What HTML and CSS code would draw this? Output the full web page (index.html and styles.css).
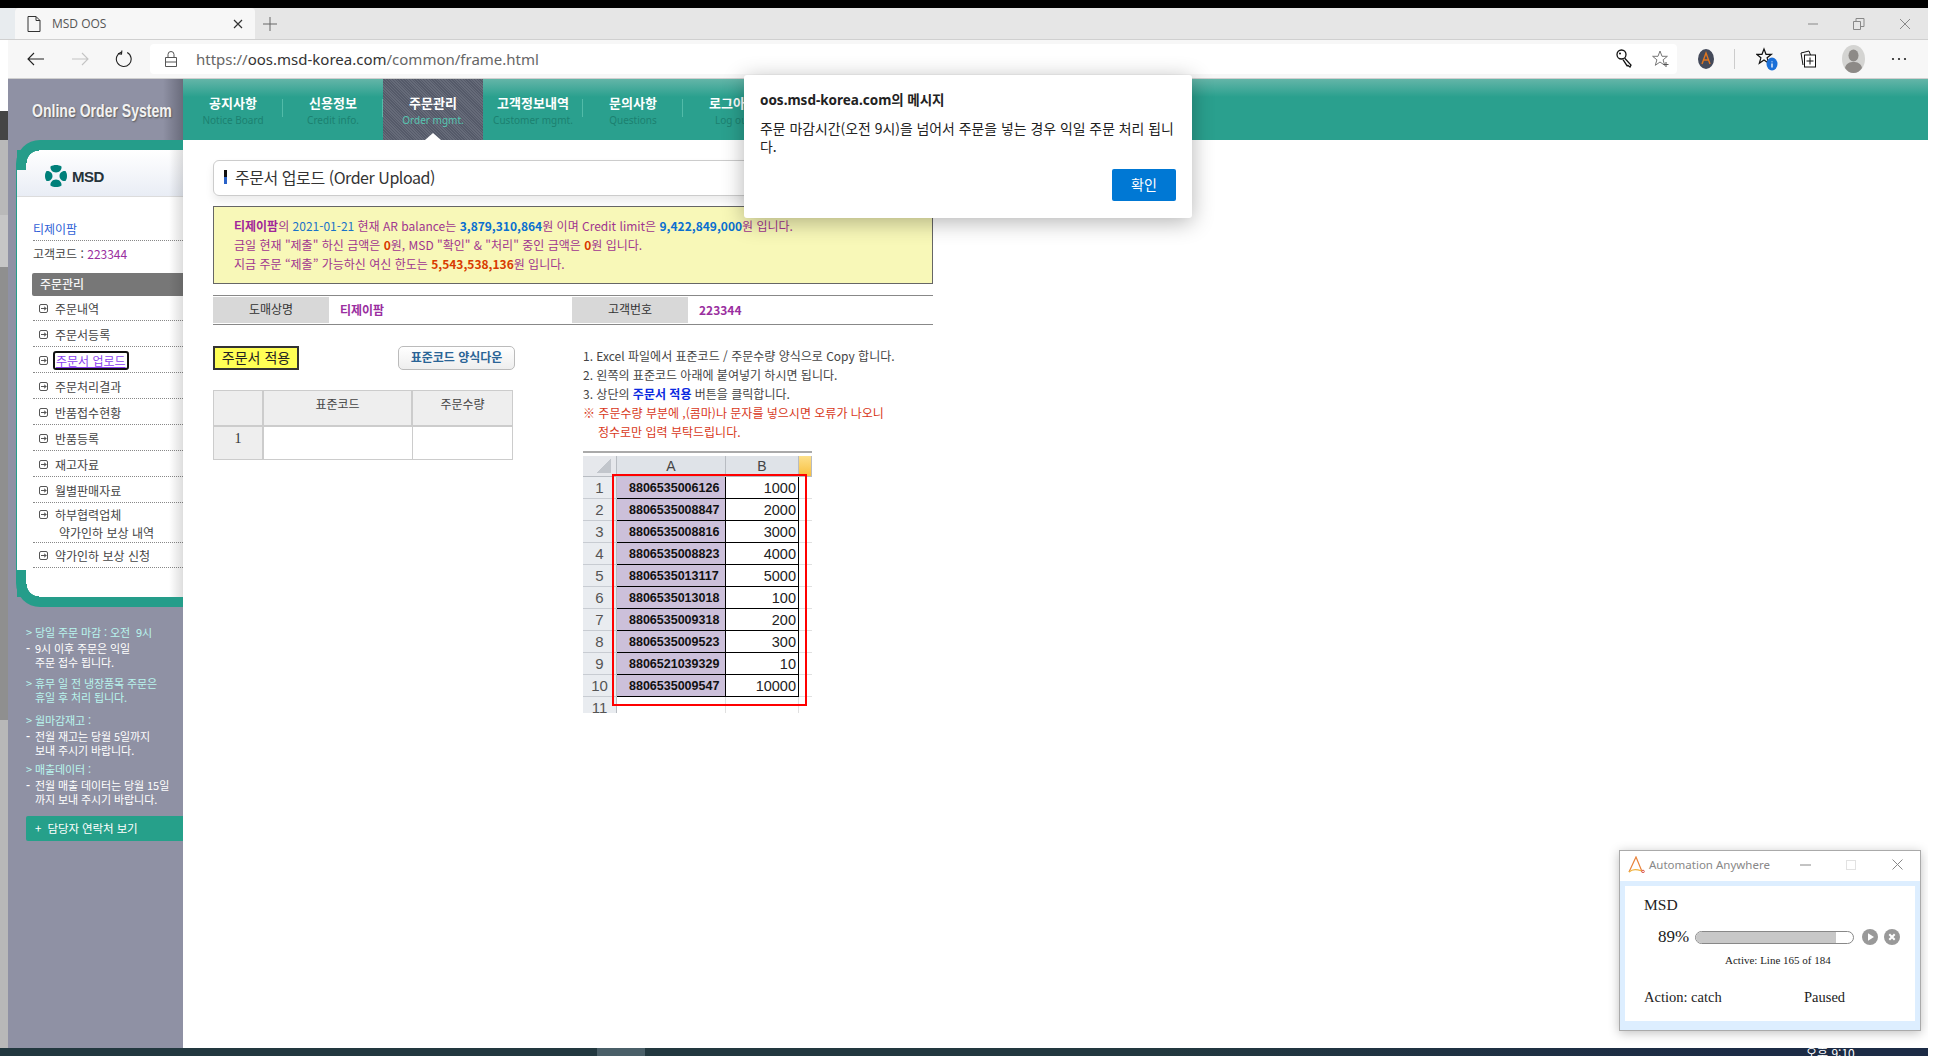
FILE: index.html
```html
<!DOCTYPE html>
<html lang="ko">
<head>
<meta charset="utf-8">
<title>MSD OOS</title>
<link rel="stylesheet" href="styles.css">
</head>
<body>
<div class="screen">
  <div class="topblack"></div>
  <div class="desk">
    <div class="behind">
      <div class="b1"></div><div class="b2"></div><div class="b3"></div><div class="b4"></div><div class="b5"></div><div class="b6"></div><div class="b7"></div>
    </div>
    <div class="browser">
      <div class="tabstrip">
        <div class="tab">
          <svg class="ic-doc" width="14" height="16" viewBox="0 0 14 16"><path d="M1 .5h8l4 4v11H1z M9 .5v4h4" fill="none" stroke="#333"/></svg>
          <span class="tab-title">MSD OOS</span>
          <svg class="ic-x" width="10" height="10" viewBox="0 0 10 10"><path d="M1 1l8 8M9 1l-8 8" stroke="#333" stroke-width="1.2"/></svg>
        </div>
        <svg class="ic-plus" width="16" height="16" viewBox="0 0 16 16"><path d="M8 1v14M1 8h14" stroke="#666"/></svg>
        <div class="winctl">
          <svg width="12" height="12" viewBox="0 0 12 12"><path d="M1 6h10" stroke="#888"/></svg>
          <svg width="12" height="12" viewBox="0 0 12 12"><path d="M.5 3.5h7v8h-7z M3 3.5V.5h8v8H7.5" fill="none" stroke="#888"/></svg>
          <svg width="12" height="12" viewBox="0 0 12 12"><path d="M1 1l10 10M11 1L1 11" stroke="#888"/></svg>
        </div>
      </div>
      <div class="toolbar">
        <svg class="tb-back" width="18" height="14" viewBox="0 0 18 14"><path d="M17 7H1M7 1L1 7l6 6" fill="none" stroke="#222" stroke-width="1.1"/></svg>
        <svg class="tb-fwd" width="18" height="14" viewBox="0 0 18 14"><path d="M1 7h16M11 1l6 6-6 6" fill="none" stroke="#c4c4c4" stroke-width="1.1"/></svg>
        <svg class="tb-ref" width="18" height="18" viewBox="0 0 18 18"><path d="M11.5 2.2A7.4 7.4 0 1 1 5.8 2.3M6 .8v3.6H2.4" fill="none" stroke="#222" stroke-width="1.1" transform="rotate(6 9 9)"/></svg>
        <div class="addr">
          <svg class="ic-lock" width="12" height="16" viewBox="0 0 12 16"><path d="M.5 6.5h11v9H.5zM3 6.5V3.5a3 3 0 0 1 6 0v3M.5 11h11" fill="none" stroke="#555"/></svg>
          <span class="url"><span class="u-dim">https://</span>oos.msd-korea.com<span class="u-dim">/common/frame.html</span></span>
          <svg class="ic-key" width="18" height="20" viewBox="0 0 18 20"><circle cx="5.5" cy="5.5" r="4.5" fill="#fff" stroke="#111" stroke-width="1.3"/><path d="M8.5 9l6.5 7-1 2-2-1.5-1 .2-4-6" fill="#fff" stroke="#111" stroke-width="1.3"/><circle cx="4" cy="4.5" r="1" fill="#111"/></svg>
          <svg class="ic-star" width="18" height="18" viewBox="0 0 18 18"><path d="M8 1l2 5.3h5.4l-4.3 3.5 1.6 5.5L8 12l-4.7 3.3 1.6-5.5L.6 6.300H6z" fill="none" stroke="#777"/><path d="M14 12v5M11.500 14.500h5" stroke="#555"/></svg>
        </div>
        <div class="tb-right">
          <svg class="ic-ext" width="16" height="20" viewBox="0 0 16 20"><ellipse cx="8" cy="10" rx="8" ry="10" fill="#444a5a"/><path d="M4 15L8 4l4 11M5.500 11h5" fill="none" stroke="#e0761e" stroke-width="1.4"/></svg>
          <span class="tb-sep"></span>
          <svg class="ic-fav" width="22" height="24" viewBox="0 0 22 24"><path d="M8 2l2 5.300h5.400l-4.300 3.500 1.600 5.500L8 13l-4.700 3.300 1.600-5.500L.6 7.300H6z" fill="none" stroke="#111" stroke-width="1.200"/><ellipse cx="16" cy="17" rx="5.500" ry="6.500" fill="#1a6fd8"/><path d="M16 14.500v.8M16 16.500v4" stroke="#fff" stroke-width="1.300"/></svg>
          <svg class="ic-coll" width="16" height="18" viewBox="0 0 16 18"><path d="M1 3l8-2 1.500 4M1 3l2 12" fill="none" stroke="#111"/><rect x="4.500" y="5" width="11" height="12" fill="#fff" stroke="#111"/><path d="M10 7.500v7M6.500 11h7" stroke="#111"/></svg>
          <svg class="ic-user" width="23" height="28" viewBox="0 0 23 28"><ellipse cx="11.500" cy="14" rx="11.500" ry="14" fill="#d4d4d2"/><ellipse cx="11.500" cy="10.500" rx="5" ry="6" fill="#8d8a87"/><path d="M3 23c1-5 5-6 8.500-6s7.500 1 8.500 6c-2 3-5 5-8.500 5S5 26 3 23z" fill="#8d8a87"/></svg>
          <svg class="ic-dots" width="16" height="4" viewBox="0 0 16 4"><circle cx="2" cy="2" r="1.100" fill="#222"/><circle cx="8" cy="2" r="1.100" fill="#222"/><circle cx="14" cy="2" r="1.100" fill="#222"/></svg>
        </div>
      </div>
      <div class="page">
        <aside class="side">
          <div class="side-title"><span>Online Order System</span></div>
          <div class="panel">
            <div class="panel-in">
              <div class="msd">
                <svg width="22" height="22" viewBox="0 0 22 22"><path d="M5.500 1.500C7 .5 9 0 11 0s4 .5 5.500 1.500C17 4.500 14.500 7.500 11 7.500S5 4.500 5.500 1.500zM5.500 20.500C7 21.500 9 22 11 22s4-.5 5.500-1.500C17 17.500 14.500 14.500 11 14.500S5 17.500 5.500 20.500zM0 11c0-2 .5-3.500 1.500-5C5 5.500 7.500 8 7.500 11S5 16.500 1.500 16C.5 14.500 0 13 0 11zM22 11c0-2-.5-3.500-1.500-5C17 5.500 14.500 8 14.500 11s2.500 5.500 6 5c1-1.500 1.500-3 1.500-5z" fill="#00807a"/></svg>
                <span class="msd-t">MSD</span>
              </div>
              <div class="cust">
                <a class="cust-name">티제이팜</a>
                <div class="cust-code">고객코드 : <span class="pur">223344</span></div>
              </div>
              <div class="menu-h">주문관리</div>
              <ul class="menu">
                <li><span class="mi"><i></i></span><span>주문내역</span></li>
                <li><span class="mi"><i></i></span><span>주문서등록</span></li>
                <li><span class="mi"><i></i></span><span class="focus">주문서 업로드</span></li>
                <li><span class="mi"><i></i></span><span>주문처리결과</span></li>
                <li><span class="mi"><i></i></span><span>반품접수현황</span></li>
                <li><span class="mi"><i></i></span><span>반품등록</span></li>
                <li><span class="mi"><i></i></span><span>재고자료</span></li>
                <li><span class="mi"><i></i></span><span>월별판매자료</span></li>
                <li class="two"><div class="li-top"><span class="mi"><i></i></span><span>하부협력업체</span></div><div class="sub">약가인하 보상 내역</div></li>
                <li class="last"><span class="mi"><i></i></span><span>약가인하 보상 신청</span></li>
              </ul>
            </div>
          </div>
          <div class="notes">
            <div class="note n1"><div class="nh"><b>&gt;</b>당일 주문 마감 : 오전 &nbsp;9시</div><div class="nb"><b>-</b>9시 이후 주문은 익일<br>주문 접수 됩니다.</div></div>
            <div class="note n2"><div class="nh two-l"><b>&gt;</b>휴무 일 전 냉장품목 주문은<br>휴일 후 처리 됩니다.</div></div>
            <div class="note n3"><div class="nh"><b>&gt;</b>월마감재고 :</div><div class="nb"><b>-</b>전월 재고는 당월 5일까지<br>보내 주시기 바랍니다.</div></div>
            <div class="note n4"><div class="nh"><b>&gt;</b>매출데이터 :</div><div class="nb"><b>-</b>전월 매출 데이터는 당월 15일<br>까지 보내 주시기 바랍니다.</div></div>
            <div class="contact">+ &nbsp;담당자 연락처 보기</div>
          </div>
        </aside>
        <main class="main">
          <nav class="nav">
            <div class="ni"><b>공지사항</b><small>Notice Board</small></div>
            <div class="ni"><b>신용정보</b><small>Credit info.</small></div>
            <div class="ni on"><b>주문관리</b><small>Order mgmt.</small></div>
            <div class="ni"><b>고객정보내역</b><small>Customer mgmt.</small></div>
            <div class="ni"><b>문의사항</b><small>Questions</small></div>
            <div class="ni"><b>로그아웃</b><small>Log out</small></div>
          </nav>
          <div class="body">
            <div class="title"><span class="mark"></span>주문서 업로드 (Order Upload)</div>
            <div class="notice">
              <div><b class="pur2">티제이팜</b>의 <span class="dt">2021-01-21</span> 현재 AR balance는 <b class="amt">3,879,310,864</b>원 이며 Credit limit은 <b class="amt">9,422,849,000</b>원 입니다.</div>
              <div>금일 현재 "제출" 하신 금액은 <b class="red">0</b>원, MSD "확인" &amp; "처리" 중인 금액은 <b class="red">0</b>원 입니다.</div>
              <div>지금 주문 “제출” 가능하신 여신 한도는 <b class="red">5,543,538,136</b>원 입니다.</div>
            </div>
            <div class="info">
              <div class="il">도매상명</div><div class="iv iv1">티제이팜</div>
              <div class="il">고객번호</div><div class="iv">223344</div>
            </div>
            <div class="cols">
              <div class="colL">
                <div class="btns">
                  <div class="apply">주문서 적용</div>
                  <div class="dl">표준코드 양식다운</div>
                </div>
                <div class="sheet">
                  <div class="sh c0"></div><div class="sh c1">표준코드</div><div class="sh c2">주문수량</div>
                  <div class="sn">1</div><div class="sc"></div><div class="sc"></div>
                </div>
              </div>
              <div class="colR">
                <div class="ins">
                  <div>1. Excel 파일에서 표준코드 / 주문수량 양식으로 Copy 합니다.</div>
                  <div>2. 왼쪽의 표준코드 아래에 붙여넣기 하시면 됩니다.</div>
                  <div>3. 상단의 <b class="blue">주문서 적용</b> 버튼을 클릭합니다.</div>
                  <div class="warn">※ 주문수량 부분에 ,(콤마)나 문자를 넣으시면 오류가 나오니</div>
                  <div class="warn ind">정수로만 입력 부탁드립니다.</div>
                </div>
                <div class="xl">
                  <div class="xtop"></div>
                  <div class="xgrid">
                    <div class="xh xc"></div><div class="xh">A</div><div class="xh">B</div><div class="xh xo"></div>
                    <div class="rh">1</div><div class="a">8806535006126</div><div class="v">1000</div><div class="e"></div>
                    <div class="rh">2</div><div class="a">8806535008847</div><div class="v">2000</div><div class="e"></div>
                    <div class="rh">3</div><div class="a">8806535008816</div><div class="v">3000</div><div class="e"></div>
                    <div class="rh">4</div><div class="a">8806535008823</div><div class="v">4000</div><div class="e"></div>
                    <div class="rh">5</div><div class="a">8806535013117</div><div class="v">5000</div><div class="e"></div>
                    <div class="rh">6</div><div class="a">8806535013018</div><div class="v">100</div><div class="e"></div>
                    <div class="rh">7</div><div class="a">8806535009318</div><div class="v">200</div><div class="e"></div>
                    <div class="rh">8</div><div class="a">8806535009523</div><div class="v">300</div><div class="e"></div>
                    <div class="rh">9</div><div class="a">8806521039329</div><div class="v">10</div><div class="e"></div>
                    <div class="rh">10</div><div class="a">8806535009547</div><div class="v">10000</div><div class="e"></div>
                    <div class="rh">11</div><div class="blank"></div><div class="blank"></div><div class="e"></div>
                  </div>
                  <div class="redbox"></div>
                </div>
              </div>
            </div>
          </div>
        </main>
      </div>
    </div>
  </div>
  <div class="taskbar">
    <span class="task-on"></span>
    <span class="clock">오후 9:10</span>
  </div>

  <div class="dialog">
    <div class="d-title">oos.msd-korea.com의 메시지</div>
    <div class="d-text">주문 마감시간(오전 9시)을 넘어서 주문을 넣는 경우 익일 주문 처리 됩니다.</div>
    <div class="d-foot"><span class="d-btn">확인</span></div>
  </div>

  <div class="aa">
    <div class="aa-bar">
      <svg class="aa-logo" width="17" height="17" viewBox="0 0 17 17"><path d="M1 16L8 1l6 14.500" fill="none" stroke="#e8833a" stroke-width="1.200"/><path d="M1 16c4-3.500 8-2.500 13-1" fill="none" stroke="#f0b23c" stroke-width="1.200"/><circle cx="15" cy="15.500" r="1.300" fill="none" stroke="#d9534f"/></svg>
      <span class="aa-name">Automation Anywhere</span>
      <svg class="aa-min" width="11" height="2" viewBox="0 0 11 2"><path d="M0 1h11" stroke="#888"/></svg>
      <svg class="aa-max" width="10" height="10" viewBox="0 0 10 10"><rect x=".5" y=".5" width="9" height="9" fill="none" stroke="#e2e2e2"/></svg>
      <svg class="aa-x" width="11" height="11" viewBox="0 0 11 11"><path d="M.5.5l10 10M10.500.5l-10 10" stroke="#888"/></svg>
    </div>
    <div class="aa-body">
      <div class="aa-msd">MSD</div>
      <div class="aa-prog">
        <span class="aa-pct">89%</span>
        <span class="aa-track"><span class="aa-fill" style="width:89%"></span></span>
        <svg class="aa-b" width="16" height="16" viewBox="0 0 16 16"><circle cx="8" cy="8" r="8" fill="#999"/><path d="M6 4.300v7.400L12 8z" fill="#fff"/></svg>
        <svg class="aa-b2" width="16" height="16" viewBox="0 0 16 16"><circle cx="8" cy="8" r="8" fill="#999"/><path d="M5.300 5.300l5.400 5.400M10.700 5.300l-5.400 5.400" stroke="#fff" stroke-width="2"/></svg>
      </div>
      <div class="aa-line">Active: Line 165 of 184</div>
      <div class="aa-foot"><span class="aa-act">Action: catch</span><span>Paused</span></div>
    </div>
  </div>
</div>
</body>
</html>
```
FILE: styles.css
```css
* { box-sizing: border-box; }
html, body { margin: 0; padding: 0; background: #fff; }
body { width: 1936px; height: 1056px; overflow: hidden; font-family: "Noto Sans CJK KR", "Noto Sans", sans-serif; font-size: 12px; color: #333; }
ul { list-style: none; margin: 0; padding: 0; }
svg { display: block; flex: none; }

.screen { position: relative; width: 1928px; height: 1056px; display: flex; flex-direction: column; overflow: hidden; }
.topblack { height: 8px; background: #000; flex: none; }
.desk { flex: 1; display: flex; min-height: 0; }
.taskbar { height: 8px; flex: none; display: flex; align-items: flex-start; background: linear-gradient(90deg, #22383f 0, #22383f 60%, #1c2b45 90%); overflow: hidden; padding-left: 597px; }
.task-on { width: 48px; height: 8px; background: #4a5f68; flex: none; }
.clock { margin-left: 1161px; color: #fff; font-size: 12px; line-height: 12px; margin-top: -1px; white-space: nowrap; }

.behind { width: 8px; flex: none; display: flex; flex-direction: column; }
.b1 { height: 32px; background: #e8ecef; }
.b2 { height: 71px; background: #fff; }
.b3 { height: 29px; background: #454545; }
.b4 { height: 75px; background: #b9b9b9; }
.b5 { height: 52px; background: #c6c6c6; }
.b6 { height: 453px; background: #8f8f8f; }
.b7 { flex: 1; background: #b8b8b8; }

.browser { flex: 1; min-width: 0; display: flex; flex-direction: column; }
.tabstrip { height: 32px; flex: none; border-bottom: 1px solid #d0d0d0; display: flex; align-items: flex-end; margin-left: -8px; padding-left: 15px; background: linear-gradient(90deg, #e8ecef 0, #e8ecef 15px, #e6e6e6 15px); }
.tab { width: 240px; height: 31px; background: #f7f7f7; border-radius: 4px 4px 0 0; display: flex; align-items: center; padding-left: 12px; color: #555; }
.tab-title { margin-left: 11px; font-family: "Open Sans", sans-serif; font-size: 12px; width: 181px; }
.ic-x { margin-left: 0; }
.ic-plus { margin: 0 0 7px 7px; }
.winctl { margin-left: auto; display: flex; gap: 34px; align-self: center; padding-right: 17px; }

.toolbar { height: 39px; flex: none; background: #f7f7f7; border-bottom: 1px solid #cfcfcf; display: flex; align-items: center; }
.tb-back { margin-left: 19px; }
.tb-fwd { margin-left: 26px; }
.tb-ref { margin-left: 26px; }
.addr { margin-left: 17px; width: 1527px; height: 30px; background: #fff; border-radius: 4px; display: flex; align-items: center; padding-left: 15px; }
.url { margin-left: 19px; font-family: "Noto Sans", sans-serif; font-size: 15px; color: #333; white-space: nowrap; }
.u-dim { color: #666; }
.ic-key { margin-left: auto; }
.ic-star { margin: 0 7px 0 18px; }
.tb-right { flex: 1; display: flex; align-items: center; padding-left: 21px; }
.tb-sep { width: 1px; height: 20px; background: #ccc; margin-left: 20px; }
.ic-fav { margin-left: 21px; }
.ic-coll { margin-left: 22px; }
.ic-user { margin-left: 26px; }
.ic-dots { margin-left: 26px; }

.page { flex: 1; min-height: 0; display: flex; }
.side { width: 175px; flex: none; background: #8f91a4; overflow: hidden; }
.side-title { height: 61px; padding: 0 0 0 24px; line-height: 64px; font-family: "Liberation Sans", sans-serif; font-weight: 700; font-size: 19px; color: #f2f2f2; white-space: nowrap; text-shadow: 1px 1px 2px #555; background: linear-gradient(90deg, transparent 155px, #6a6c7c 175px); overflow: hidden; }
.side-title span { display: inline-block; transform: scaleX(.74); transform-origin: 0 50%; }

.panel { margin-left: 8px; height: 467px; background: #259d8a; border-radius: 24px 0 0 24px; padding: 10px 0 10px 1px; }
.panel-in { position: relative; height: 447px; background: #fff; overflow: hidden; }
.panel-in::before { content: ""; position: absolute; left: 0; top: 0; width: 22px; height: 20px; background: radial-gradient(circle at 100% 100%, transparent 0, transparent 12px, #259d8a 12.5px) 9px 0 / 13px 13px no-repeat, linear-gradient(#259d8a, #259d8a) 0 0 / 9px 20px no-repeat; }
.panel-in::after { content: ""; position: absolute; inset: 0; background: radial-gradient(circle at 100% 0, transparent 0, transparent 12px, #259d8a 12.5px) 9px 100% / 13px 13px no-repeat, linear-gradient(#259d8a, #259d8a) 0 100% / 9px 27px no-repeat, linear-gradient(90deg, transparent 152px, rgba(0,0,0,.13) 166px); pointer-events: none; }
.msd { height: 47px; display: flex; align-items: center; padding: 6px 0 0 28px; background: linear-gradient(#fff, #e9edf5); border-bottom: 1px solid #dcdcdc; }
.msd-t { margin-left: 5px; font-family: "Liberation Sans", sans-serif; font-weight: 700; font-size: 15px; letter-spacing: -.5px; color: #26333a; }
.cust { padding: 21px 0 0 16px; }
.cust-name { display: block; height: 23px; line-height: 22px; color: #2f5fd6; border-bottom: 1px dotted #888; }
.cust-code { height: 32px; line-height: 26px; color: #444; }
.pur { color: #9a2ea0; }
.menu-h { margin-left: 15px; height: 23px; line-height: 22px; padding-left: 8px; background: #777; color: #f4f4f4; border-radius: 2px 0 0 2px; font-weight: 500; }
.menu { margin-left: 16px; }
.menu li { height: 26px; display: flex; align-items: center; border-bottom: 1px dotted #888; padding: 2px 0 0 6px; color: #444; }
.menu li:first-child { height: 25px; padding-top: 1px; }
.menu li.two { display: block; height: 40px; padding-top: 0; }
.li-top { display: flex; align-items: center; height: 22px; }
.sub { padding-left: 20px; line-height: 15px; }
.menu li.last { height: 25px; padding-top: 0; }
.mi { width: 9px; height: 9px; border: 1px solid #555; border-radius: 2px; margin-right: 7px; flex: none; display: block; background: linear-gradient(#555, #555) 1px 3px / 5px 1px no-repeat; }
.mi i { display: block; width: 3px; height: 3px; margin: 2px 0 0 3px; border-top: 1px solid #555; border-right: 1px solid #555; transform: rotate(45deg); }
.focus { border: 2px solid #111; border-radius: 3px; color: #8a3ff0; text-decoration: underline; padding: 0 1px; line-height: 15px; margin-left: -2px; }

.notes { padding-left: 18px; color: #fff; font-size: 11px; line-height: 14px; letter-spacing: -.1px; }
.note b { font-weight: 400; display: inline-block; width: 9px; text-indent: 0; }
.nb b { font-weight: 700; }
.nh { color: #b9f5ee; white-space: nowrap; }
.nb { padding-left: 9px; text-indent: -9px; margin-top: 2px; white-space: nowrap; }
.two-l { padding-left: 9px; text-indent: -9px; }
.n1 { margin-top: 18px; }
.n2 { margin-top: 7px; }
.n3 { margin-top: 9px; }
.n4 { margin-top: 5px; }
.contact { margin: 10px 0 0 0; height: 25px; line-height: 24px; padding-left: 9px; background: #26a08a; color: #fff; border-radius: 2px 0 0 2px; font-size: 11.5px; }

.main { flex: 1; min-width: 0; background: #fff; }
.nav { height: 61px; display: flex; background: linear-gradient(#64b5a8, #2aa08e 18px); }
.ni { position: relative; width: 100px; padding-top: 15px; display: flex; flex-direction: column; align-items: center; background: linear-gradient(#52bba8, #52bba8) 100% 20px / 1px 18px no-repeat; white-space: nowrap; }
.ni b { font-size: 13px; line-height: 18px; color: #fff; font-weight: 700; }
.ni small { font-family: "Noto Sans", sans-serif; font-size: 10px; line-height: 14px; margin-top: 1px; color: #1c8070; }
.ni.on { background: repeating-linear-gradient(45deg, #666b79 0 1px, #555a69 1px 2px); }
.ni.on small { color: #58c6b2; }
.ni.on::after { content: ""; position: absolute; left: 42px; bottom: 0; border: 8px solid transparent; border-top: 0; border-bottom: 7px solid #fff; }

.body { padding: 20px 0 0 30px; width: 750px; }
.title { height: 36px; width: 720px; border: 1px solid #ccc; border-radius: 6px; box-shadow: 0 5px 8px rgba(0,0,0,.08); display: flex; align-items: center; padding: 0 0 2px 10px; font-size: 16px; letter-spacing: -.45px; color: #333; }
.mark { width: 3px; height: 14px; margin-right: 8px; background: linear-gradient(#111 50%, #2a62c8 50%); }
.notice { margin-top: 10px; width: 720px; height: 78px; background: #f8f8b8; border: 1px solid #666; padding: 10px 0 0 20px; color: #a0358f; line-height: 18.75px; font-size: 12px; white-space: nowrap; }
.pur2 { color: #a0259a; }
.dt { color: #1a73c8; }
.amt { color: #0a6fd0; }
.red { color: #d83a00; }

.info { margin-top: 11px; width: 720px; height: 30px; border-top: 1px solid #888; border-bottom: 1px solid #888; padding: 1px 0; display: flex; }
.il { width: 116px; background: #d8d8d8; text-align: center; line-height: 24px; color: #333; }
.iv { padding-left: 11px; line-height: 26px; color: #9a2ea0; font-weight: 700; }
.iv1 { width: 243px; }

.cols { display: flex; margin-top: 21px; }
.colL { width: 370px; flex: none; }
.btns { width: 302px; display: flex; justify-content: space-between; }
.apply { width: 86px; height: 24px; background: #ffff55; border: 2px solid #333; text-align: center; line-height: 19px; font-size: 14px; color: #222; }
.dl { width: 117px; height: 24px; border: 1px solid #bbb; border-radius: 5px; background: linear-gradient(#fff, #eee); text-align: center; line-height: 20px; font-weight: 700; color: #2a6496; }
.sheet { margin-top: 20px; width: 300px; display: grid; grid-template-columns: 50px 149px 99px; grid-template-rows: 36px 32px; border: 1px solid #ccc; }
.sh { background: #eee; border-right: 2px solid #ccc; border-bottom: 2px solid #ccc; text-align: center; line-height: 26px; color: #444; }
.c2 { border-right: 0; }
.sn { background: #eee; border-right: 2px solid #ccc; text-align: center; font-family: "Liberation Serif", serif; font-size: 14px; line-height: 24px; color: #333; }
.sc { border-right: 1px solid #ccc; }
.sc:last-child { border-right: 0; }

.ins { line-height: 19px; font-size: 12px; color: #444; white-space: nowrap; }
.blue { color: #0a2ae0; }
.warn { color: #d8381a; }
.ind { padding-left: 15px; }
.xl { position: relative; margin-top: 9px; width: 229px; height: 263px; overflow: hidden; }
.xtop { height: 6px; border-top: 2px solid #aaa; margin-top: 1px; }
.xgrid { display: grid; grid-template-columns: 34px 109px 73px 13px; grid-template-rows: 21px repeat(11, 22px); margin-top: -1px; }
.xh { background: #dfe3e8; border-right: 1px solid #b8bcc2; border-bottom: 1px solid #b8bcc2; text-align: center; font-family: "Liberation Sans", sans-serif; font-size: 14px; line-height: 20px; color: #444; }
.xc { background: linear-gradient(135deg, #e6e8ec 0 50%, #c2c6cc 50%) 14px 3px / 14px 14px no-repeat, #e6e8ec; }
.xo { background: linear-gradient(#fde08a, #f8c040); }
.rh { background: #e9ecf0; border-right: 1px solid #b8bcc2; border-bottom: 1px solid #c8ccd2; text-align: center; font-family: "Liberation Sans", sans-serif; font-size: 15px; line-height: 22px; color: #555; }
.a { background: #ccc0da; border-bottom: 1px solid #000; border-right: 1px solid #000; padding-left: 12px; font-family: "Liberation Sans", sans-serif; font-weight: 700; font-size: 12.5px; line-height: 22px; color: #111; }
.v { border-bottom: 1px solid #000; border-right: 1px solid #000; text-align: right; padding-right: 2px; font-family: "Liberation Sans", sans-serif; font-size: 14.5px; line-height: 22px; color: #222; }
.e { border-bottom: 1px solid #e0e0e0; }
.blank { border-right: 1px solid #e0e0e0; }
.redbox { position: absolute; left: 29px; top: 24px; width: 195px; height: 232px; border: 2px solid #f00; }

.dialog { position: absolute; left: 744px; top: 75px; width: 448px; height: 143px; background: #fff; border-radius: 3px; box-shadow: 0 4px 22px rgba(0,0,0,.3); padding: 16px; }
.d-title { font-family: "Noto Sans", "Noto Sans CJK KR", sans-serif; font-weight: 700; font-size: 13.5px; line-height: 18px; color: #222; white-space: nowrap; }
.d-text { margin-top: 10px; font-size: 13.9px; line-height: 18px; color: #222; word-break: break-all; }
.d-foot { margin-top: 14px; display: flex; justify-content: flex-end; }
.d-btn { width: 64px; height: 32px; background: #0078d4; border-radius: 2px; color: #fff; font-size: 14px; line-height: 31px; text-align: center; }

.aa { position: absolute; left: 1619px; top: 850px; width: 302px; height: 181px; border: 1px solid #aaa; background: #ddeeff; box-shadow: 0 2px 10px rgba(0,0,0,.25); }
.aa-bar { height: 30px; background: #fff; display: flex; align-items: center; padding: 0 0 3px 8px; }
.aa-name { margin-left: 4px; width: 150px; font-size: 11.5px; color: #888; font-family: "Noto Sans", sans-serif; white-space: nowrap; }
.aa-min { margin-left: 1px; }
.aa-max { margin-left: 35px; }
.aa-x { margin-left: 36px; }
.aa-body { margin: 5px 5px 0; height: 135px; background: #fff; font-family: "Liberation Serif", serif; color: #222; padding: 10px 0 0 19px; }
.aa-msd { font-size: 15.5px; line-height: 18px; }
.aa-prog { display: flex; align-items: center; margin: 15px 0 0 14px; height: 16px; }
.aa-pct { font-size: 17px; width: 37px; white-space: nowrap; }
.aa-track { width: 159px; height: 13px; border: 1px solid #888; border-radius: 7px; overflow: hidden; background: #fff; }
.aa-fill { display: block; height: 100%; background: #c8c8c8; }
.aa-b { margin-left: 8px; }
.aa-b2 { margin-left: 6px; }
.aa-line { margin: 8px 0 0 81px; font-size: 11px; line-height: 14px; }
.aa-foot { display: flex; margin-top: 21px; font-size: 14.5px; line-height: 18px; }
.aa-act { width: 160px; }
```
